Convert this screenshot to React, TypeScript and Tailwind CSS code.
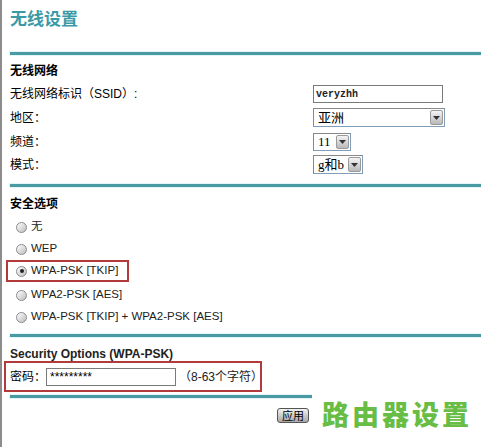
const font = "font-['Liberation_Sans','Noto_Sans_CJK_SC',sans-serif]";

function Rule({ className = "" }: { className?: string }) {
  return <div className={`h-[3px] bg-[#4a9aa4] shadow-[0_0_0_1px_#e2f6f8] ${className}`} />;
}

function Arrow() {
  return (
    <div className="flex w-[13px] h-full items-center justify-center rounded-[2px] border border-[#9a9a9a] bg-linear-to-b from-[#f4f4f4] to-[#b8b8b8]">
      <svg width="7" height="4" viewBox="0 0 7 4">
        <path d="M0 0H7L3.5 4Z" fill="#333" />
      </svg>
    </div>
  );
}

function Select({ value, width, text = "text-[13px]" }: { value: string; width: string; text?: string }) {
  return (
    <div className={`flex h-full ${width} border border-[#7f9db9] border-t-[#888] border-l-[#888] bg-white p-px`}>
      <div className={`flex-1 flex items-center pl-[3px] ${text} font-['Liberation_Serif','Noto_Sans_CJK_SC',serif] text-black`}>
        {value}
      </div>
      <Arrow />
    </div>
  );
}

function Radio({ label, checked = false }: { label: string; checked?: boolean }) {
  return (
    <div className="flex items-center gap-[4px] h-full pl-[6px]">
      <div className="w-[11px] h-[11px] rounded-full border border-[#8a8a8a] bg-linear-to-br from-[#ffffff] to-[#bdbdbd] flex items-center justify-center">
        {checked && <div className="w-[4px] h-[4px] rounded-full bg-[#222]" />}
      </div>
      <span className="text-[11.5px] whitespace-nowrap text-[#222]">{label}</span>
    </div>
  );
}

export default function App() {
  return (
    <div className={`relative w-[481px] h-[447px] overflow-hidden bg-white border-l-2 border-[#8c8c8c] ${font}`}>
      <div className="pl-[8px]">
        {/* 标题 */}
        <div className="h-[52px] pt-[7px] text-[17px] font-bold leading-[22px] text-[#3a9aa6] font-['Noto_Sans_CJK_SC',sans-serif]">
          无线设置
        </div>
        <Rule />

        {/* 无线网络 */}
        <div className="mt-[7px] h-[18px] flex items-center text-[12px] font-bold text-black">无线网络</div>
        <div className="mt-[5px] h-[18px] flex items-center">
          <div className="w-[303px] text-[12px] text-black">无线网络标识（SSID）:</div>
          <div className="w-[130px] h-full border border-[#7a7a7a] bg-white flex items-center pl-[2px] text-[10px] font-bold font-['Liberation_Mono',monospace] text-[#222]">
            veryzhh
          </div>
        </div>
        <div className="mt-[5px] h-[19px] flex items-center">
          <div className="w-[303px] text-[12px] text-black">地区：</div>
          <Select value="亚洲" width="w-[132px]" />
        </div>
        <div className="mt-[6px] h-[18px] flex items-center">
          <div className="w-[303px] text-[12px] text-black">频道：</div>
          <Select value="11" width="w-[38px]" />
        </div>
        <div className="mt-[4px] h-[19px] flex items-center">
          <div className="w-[303px] text-[12px] text-black">模式：</div>
          <Select value="g和b" width="w-[50px]" />
        </div>
        <Rule className="mt-[10px]" />

        {/* 安全选项 */}
        <div className="mt-[8px] h-[18px] flex items-center text-[12px] font-bold text-black">安全选项</div>
        <div className="mt-[3px] h-[22px]"><Radio label="无" /></div>
        <div className="h-[22px]"><Radio label="WEP" /></div>
        <div className="h-[22px] w-[123px] -ml-[4px] pl-[4px] border-2 border-[#b23a3a] flex items-center">
          <div className="-ml-[2px]"><Radio label="WPA-PSK [TKIP]" checked /></div>
        </div>
        <div className="mt-[2px] h-[22px]"><Radio label="WPA2-PSK [AES]" /></div>
        <div className="h-[22px]"><Radio label="WPA-PSK [TKIP] + WPA2-PSK [AES]" /></div>
        <Rule className="mt-[6px]" />

        {/* 密码 */}
        <div className="mt-[10px] h-[14px] flex items-center text-[12px] font-bold text-[#222] leading-[14px]">
          Security Options (WPA-PSK)
        </div>
        <div className="relative h-[31px] w-[258px] -ml-[6px] pl-[4px] border-2 border-[#b23a3a] flex items-center">
          <span className="shrink-0 whitespace-nowrap text-[12px] text-black w-[36px]">密码：</span>
          <div className="shrink-0 w-[130px] h-[18px] border border-[#7a7a7a] bg-white flex items-center pl-[3px] text-[12px] text-black">
            *********
          </div>
          <span className="ml-[3px] whitespace-nowrap text-[12px] text-[#222]">（8-63个字符）</span>
        </div>
        <Rule className="mt-[3px]" />

        {/* 应用 */}
        <div className="mt-[10px] flex pl-[267px]">
          <button className="w-[32px] h-[15px] rounded-[3px] border border-[#555] bg-linear-to-b from-[#f2f2f2] to-[#a8a8a8] text-[11px] leading-[12px] text-black">
            应用
          </button>
        </div>
      </div>

      {/* 水印 */}
      <div className="absolute left-[310px] top-[393px] right-0 bottom-0 bg-white flex items-start pt-[6px] pl-[10px]">
        <span className="text-[27px] leading-[30px] font-black tracking-[3px] text-[#68bd45] font-['Noto_Sans_CJK_SC',sans-serif]">
          路由器设置
        </span>
      </div>
    </div>
  );
}
